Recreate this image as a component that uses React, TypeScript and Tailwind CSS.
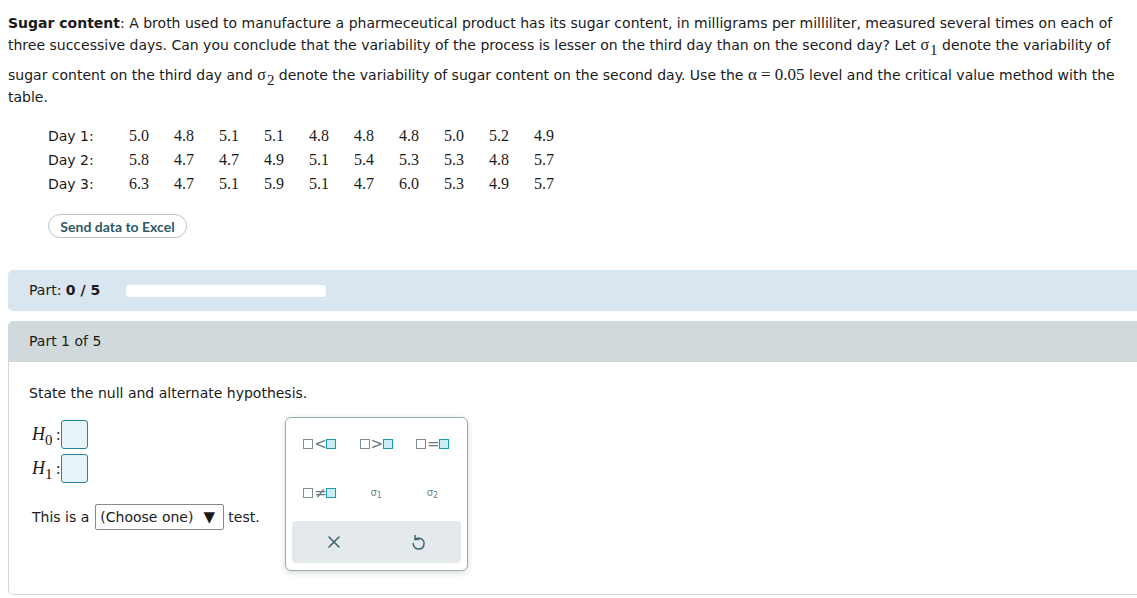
import React from "react";

const rows: [string, string[]][] = [
  ["Day 1:", ["5.0", "4.8", "5.1", "5.1", "4.8", "4.8", "4.8", "5.0", "5.2", "4.9"]],
  ["Day 2:", ["5.8", "4.7", "4.7", "4.9", "5.1", "5.4", "5.3", "5.3", "4.8", "5.7"]],
  ["Day 3:", ["6.3", "4.7", "5.1", "5.9", "5.1", "4.7", "6.0", "5.3", "4.9", "5.7"]],
];

const Sigma = ({ n }: { n: string }) => (
  <span className="font-['Liberation_Serif',serif] text-[16px]">
    σ<span className="inline-block text-[15px] translate-y-[5px] ml-[1px]">{n}</span>
  </span>
);

const Box = ({ filled }: { filled?: boolean }) => (
  <span
    className={
      filled
        ? "inline-block w-[10px] h-[10px] border-[1.5px] border-[#1b9bb0] bg-[#c9edf3]"
        : "inline-block w-[10px] h-[10px] border-[1.5px] border-[#7d8f96] bg-white"
    }
  />
);

const Rel = ({ op }: { op: string }) => (
  <button className="flex items-center justify-center gap-[1px] h-[30px] text-[#5f7a84] text-[15px] leading-none">
    <Box />
    <span className="font-['DejaVu_Sans',sans-serif] w-[11px] text-center">{op}</span>
    <Box filled />
  </button>
);

const SigKey = ({ n }: { n: string }) => (
  <button className="flex items-center justify-center h-[30px] leading-none text-[#6a848d] text-[10px] font-['DejaVu_Sans',sans-serif]">
    σ<span className="inline-block text-[8px] translate-y-[3px]">{n}</span>
  </button>
);

export default function App() {
  return (
    <div className="w-[1137px] h-[598px] overflow-hidden bg-white text-[#1a1a1a] font-['DejaVu_Sans',Verdana,sans-serif] text-[14px]">
      <div className="pl-2 pt-[12px]">
        <p className="leading-[22px] pr-2">
          <b>Sugar content</b>: A broth used to manufacture a pharmeceutical product has its sugar content, in milligrams per milliliter, measured several times on each of
          <br />
          three successive days. Can you conclude that the variability of the process is lesser on the third day than on the second day? Let <Sigma n="1" /> denote the variability of
        </p>
        <p className="leading-[22px] mt-[8px]">
          sugar content on the third day and <Sigma n="2" /> denote the variability of sugar content on the second day. Use the{" "}
          <span className="font-['Liberation_Serif',serif] text-[17px]">α = 0.05</span> level and the critical value method with the
          <br />
          table.
        </p>

        <div className="mt-[16px] ml-[40px] flex flex-col gap-0">
          {rows.map(([label, vals]) => (
            <div key={label} className="flex items-center h-[24px]">
              <span className="w-[81px] text-[14px]">{label}</span>
              {vals.map((v, i) => (
                <span key={i} className="w-[45px] font-['Liberation_Serif',serif] text-[16px]">
                  {v}
                </span>
              ))}
            </div>
          ))}
        </div>

        <button className="mt-[18px] ml-[40px] h-[24px] w-[139px] rounded-full border border-[#b9c7cc] text-[14px] font-bold text-[#2f5866] font-['Lato',sans-serif]">
          Send data to Excel
        </button>

        <div className="mt-[32px] h-[41px] rounded-l-[5px] bg-[#dae6ef] flex items-center pl-[21px]">
          <span>
            Part: <b>0 / 5</b>
          </span>
          <div className="ml-[26px] w-[200px] h-[12px] rounded-[3px] bg-white" />
        </div>

        <div className="mt-[10px] border-l border-b border-[#d1d9dc] rounded-l-[5px] h-[274px] flex flex-col">
          <div className="h-[41px] bg-[#d1d9dc] rounded-tl-[5px] flex items-center pl-[20px]">Part 1 of 5</div>
          <div className="pl-[20px] pt-[21px]">
            <p>State the null and alternate hypothesis.</p>
            <div className="flex mt-[15px]">
              <div className="flex flex-col gap-[5px] pl-[3px] pt-[1px]">
                {["0", "1"].map((n) => (
                  <div key={n} className="flex items-center">
                    <span className="font-['Liberation_Serif',serif] italic text-[18px] w-[24px]">
                      H<span className="inline-block not-italic text-[15px] translate-y-[5px]">{n}</span>
                    </span>
                    <span className="font-['Liberation_Serif',serif] text-[16px] mr-[1px]">:</span>
                    <div className="w-[27px] h-[29px] rounded-[3px] border border-[#2a8296] bg-[#e6f4f8]" />
                  </div>
                ))}
                <div className="flex items-center mt-[16px]">
                  <span>This is a</span>
                  <div className="ml-[6px] w-[129px] h-[26px] border border-[#888] rounded-[2px] flex items-center pl-[4px] text-[14px]">
                    (Choose one)
                    <span className="ml-[10px] text-[15px]">▼</span>
                  </div>
                  <span className="ml-[4px]">test.</span>
                </div>
              </div>

              <div className="relative ml-[25px] -mt-[2px] w-[183px] h-[154px] border border-[#9aabb1] rounded-[6px] bg-white shadow-[0_2px_6px_rgba(0,0,0,0.15)] px-[6px] pt-[11px]">
                <div className="grid grid-cols-3 gap-y-[19px]">
                  <Rel op="<" />
                  <Rel op=">" />
                  <Rel op="=" />
                  <Rel op="≠" />
                  <SigKey n="1" />
                  <SigKey n="2" />
                </div>
                <div className="mt-[13px] h-[42px] rounded-[4px] bg-[#e4e9eb] grid grid-cols-2 items-center">
                  <div className="flex justify-center">
                    <svg width="14" height="14" viewBox="0 0 14 14" stroke="#3f6470" strokeWidth="1.6" strokeLinecap="round">
                      <path d="M2 2 L12 12 M12 2 L2 12" />
                    </svg>
                  </div>
                  <div className="flex justify-center">
                    <svg width="16" height="17" viewBox="0 0 16 17" fill="none" stroke="#3f6470" strokeWidth="1.5" strokeLinecap="round" strokeLinejoin="round">
                      <path d="M5 5.5 A5.5 5.5 0 1 1 3.2 9.5" />
                      <path d="M5 1.5 L5 5.5 L8.8 5.2" />
                    </svg>
                  </div>
                </div>
              </div>
            </div>
          </div>
        </div>
      </div>
    </div>
  );
}
